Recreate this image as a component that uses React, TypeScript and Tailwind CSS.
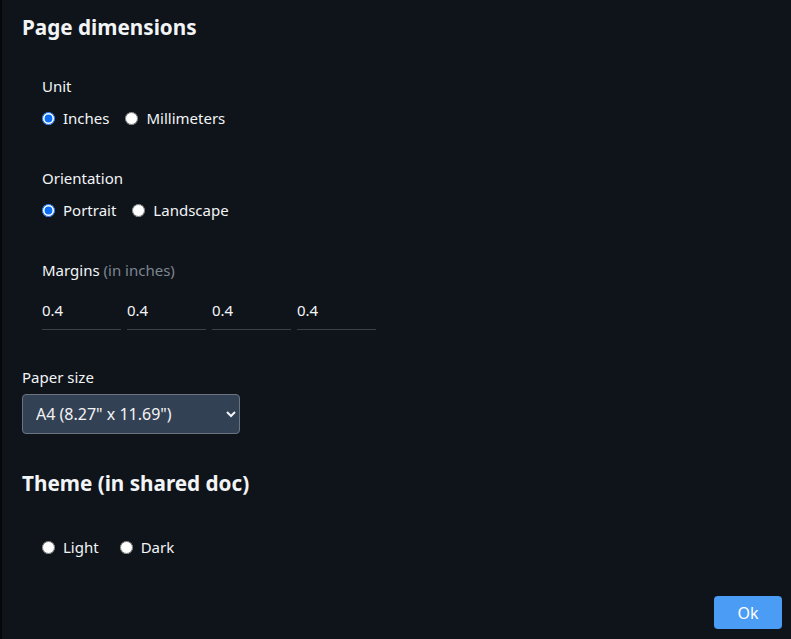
import React, { useState } from "react";

const font = { fontFamily: '"Noto Sans", Lato, sans-serif' };

const Radio: React.FC<{ label: string; checked: boolean; onChange: () => void }> = ({ label, checked, onChange }) => (
  <label className="flex items-center gap-[8px] cursor-pointer">
    <input
      type="radio"
      checked={checked}
      onChange={onChange}
      className="w-[13px] h-[13px] m-0 accent-[#0b6cf5]"
    />
    <span>{label}</span>
  </label>
);

const App: React.FC = () => {
  const [unit, setUnit] = useState("in");
  const [orientation, setOrientation] = useState("portrait");
  const [theme, setTheme] = useState("");
  const [margins, setMargins] = useState(["0.4", "0.4", "0.4", "0.4"]);

  return (
    <div className="w-full h-[639px] bg-[#05070a] pl-[2px]" style={font}>
      <div className="h-full bg-[#0f141b] text-[#f3f4f6] text-[15px] px-[20px] pt-[13px] flex flex-col">
        <h2 className="text-[20.7px] font-bold leading-[28px]">Page dimensions</h2>

        <div className="pl-[20px] mt-[35px]">
          <p className="leading-[20px]">Unit</p>
          <div className="flex gap-[16px] mt-[12px] leading-[20px]">
            <Radio label="Inches" checked={unit === "in"} onChange={() => setUnit("in")} />
            <Radio label="Millimeters" checked={unit === "mm"} onChange={() => setUnit("mm")} />
          </div>

          <p className="leading-[20px] mt-[40px]">Orientation</p>
          <div className="flex gap-[16px] mt-[12px] leading-[20px]">
            <Radio label="Portrait" checked={orientation === "portrait"} onChange={() => setOrientation("portrait")} />
            <Radio label="Landscape" checked={orientation === "landscape"} onChange={() => setOrientation("landscape")} />
          </div>

          <p className="leading-[20px] mt-[40px]">
            Margins <span className="text-[#7d8590]">(in inches)</span>
          </p>
          <div className="flex gap-[6px] mt-[20px]">
            {margins.map((m, i) => (
              <input
                key={i}
                value={m}
                onChange={(e) =>
                  setMargins((prev) => prev.map((v, j) => (j === i ? e.target.value : v)))
                }
                className="w-[79px] bg-transparent border-b border-[#3a414b] pb-[9px] leading-[20px] outline-none"
              />
            ))}
          </div>
        </div>

        <p className="leading-[20px] mt-[37px]">Paper size</p>
        <select className="mt-[7px] w-[218px] h-[40px] bg-[#334155] border border-[#6b7280] rounded-[4px] px-[9px] text-[16px] text-[#f3f4f6] outline-none">
          <option>A4 (8.27" x 11.69")</option>
          <option>Letter (8.5" x 11")</option>
          <option>Legal (8.5" x 14")</option>
        </select>

        <h2 className="text-[20.7px] font-bold leading-[28px] mt-[35px]">Theme (in shared doc)</h2>

        <div className="pl-[20px] mt-[40px] flex gap-[21px] leading-[20px]">
          <Radio label="Light" checked={theme === "light"} onChange={() => setTheme("light")} />
          <Radio label="Dark" checked={theme === "dark"} onChange={() => setTheme("dark")} />
        </div>

        <div className="flex-grow"></div>
        <div className="flex justify-end pb-[10px] -mr-[11px]">
          <button className="w-[68px] h-[33px] rounded-[4px] bg-[#4a9cf5] text-white text-[16px]">Ok</button>
        </div>
      </div>
    </div>
  );
};

export default App;
